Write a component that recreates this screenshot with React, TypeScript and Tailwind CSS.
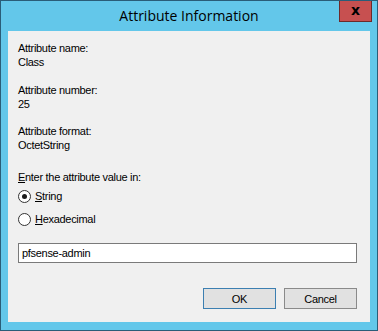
import React from "react";

const body = { fontFamily: '"Liberation Sans", Arial, sans-serif' };

function Radio({ checked }: { checked?: boolean }) {
  return (
    <span className="w-[13px] h-[13px] rounded-full border border-[#333333] bg-white flex items-center justify-center shrink-0">
      {checked && <span className="w-[5px] h-[5px] rounded-full bg-[#1a1a1a]" />}
    </span>
  );
}

export default function App() {
  return (
    <div className="w-[378px] h-[331px] bg-[#63c7ea] border border-[#2a5d78] flex flex-col">
      <div className="h-[30px] relative flex items-center justify-center shrink-0">
        <span
          className="text-[14px] text-black leading-none -mt-[1px]"
          style={{ fontFamily: '"Open Sans", "Noto Sans", sans-serif' }}
        >
          Attribute Information
        </span>
        <div className="absolute right-[5px] top-0 w-[33px] h-[21px] bg-[#c75050] border border-[#6d2a2a] border-t-0 flex items-center justify-center">
          <span className="text-[14px] font-bold text-black leading-none -mt-[2px]" style={{ fontFamily: '"DejaVu Sans", sans-serif' }}>x</span>
        </div>
      </div>
      <div
        className="mx-[7px] h-[291px] bg-[#f0f0f0] flex flex-col px-[10px] pt-[10px] text-[11px] leading-[14px] tracking-[-0.3px] text-black"
        style={body}
      >
        <div>Attribute name:</div>
        <div>Class</div>
        <div className="mt-[14px]">Attribute number:</div>
        <div>25</div>
        <div className="mt-[13px]">Attribute format:</div>
        <div>OctetString</div>
        <div className="mt-[18px]">
          <span className="underline underline-offset-[1px]">E</span>nter the attribute value in:
        </div>
        <div className="mt-[5px] h-[14px] flex items-center gap-[4px]">
          <Radio checked />
          <span>
            <span className="underline underline-offset-[1px]">S</span>tring
          </span>
        </div>
        <div className="mt-[9px] h-[14px] flex items-center gap-[4px]">
          <Radio />
          <span>
            <span className="underline underline-offset-[1px]">H</span>exadecimal
          </span>
        </div>
        <div className="mt-[17px] h-[20px] mr-[3px] bg-white border border-[#7a7a7a] flex items-center px-[3px]">
          pfsense-admin
        </div>
        <div className="mt-[25px] mr-[3px] flex justify-end gap-[8px]">
          <div className="w-[73px] h-[21px] bg-[#e1e1e1] border border-[#3c7fb1] flex items-center justify-center">
            OK
          </div>
          <div className="w-[73px] h-[21px] bg-[#e1e1e1] border border-[#8a8a8a] flex items-center justify-center">
            Cancel
          </div>
        </div>
      </div>
    </div>
  );
}
